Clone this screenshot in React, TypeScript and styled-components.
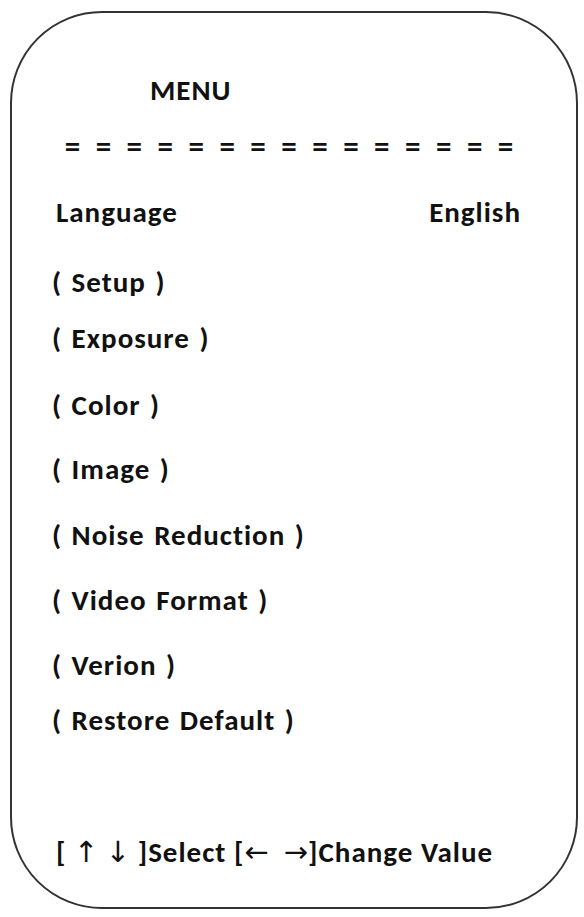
import React from "react";
import styled, { createGlobalStyle } from "styled-components";

const GlobalStyle = createGlobalStyle`
  html, body {
    margin: 0;
    padding: 0;
    background: #ffffff;
  }
  body {
    font-family: Carlito, Calibri, Lato, sans-serif;
    color: #111111;
  }
`;

const Page = styled.div`
  width: 584px;
  height: 917px;
  box-sizing: border-box;
  padding: 11px 6px 8px 10px;
  background: #ffffff;
`;

const Frame = styled.div`
  box-sizing: border-box;
  height: 100%;
  border: 2px solid #333333;
  border-radius: 92px;
  padding: 61px 55px 0 40px;
  display: flex;
  flex-direction: column;
  font-weight: 700;
  font-size: 29px;
  line-height: 32px;
  letter-spacing: 1px;
  word-spacing: 2px;
`;

const Title = styled.div`
  padding-left: 98px;
`;

const Divider = styled.div`
  display: flex;
  margin-top: 24px;
  padding-left: 5px;
  font-size: 31px;
  letter-spacing: 0;
`;

const Bar = styled.span`
  width: 31px;
  text-align: center;
`;

const SettingRow = styled.div`
  display: flex;
  justify-content: space-between;
  margin-top: 34px;
  padding-left: 4px;
`;

const Item = styled.div<{ $gap: number }>`
  margin-top: ${(p) => p.$gap}px;
`;

const Hint = styled.div`
  margin-top: 100px;
  padding-left: 4px;
  white-space: pre;
  word-spacing: 0;
`;

const Arrow = styled.span`
  font-family: "DejaVu Sans", sans-serif;
  font-weight: 400;
  letter-spacing: 0;
`;

const items: { label: string; gap: number }[] = [
  { label: "Setup", gap: 38 },
  { label: "Exposure", gap: 24 },
  { label: "Color", gap: 35 },
  { label: "Image", gap: 32 },
  { label: "Noise Reduction", gap: 34 },
  { label: "Video Format", gap: 33 },
  { label: "Verion", gap: 33 },
  { label: "Restore Default", gap: 23 },
];

export default function App() {
  return (
    <>
      <GlobalStyle />
      <Page>
        <Frame>
          <Title>MENU</Title>
          <Divider>
            {Array.from({ length: 15 }, (_, i) => (
              <Bar key={i}>=</Bar>
            ))}
          </Divider>
          <SettingRow>
            <span>Language</span>
            <span>English</span>
          </SettingRow>
          {items.map((it) => (
            <Item key={it.label} $gap={it.gap}>
              ( {it.label} )
            </Item>
          ))}
          <Hint>
            [ <Arrow>↑</Arrow> <Arrow>↓</Arrow> ]Select [<Arrow>←</Arrow>{"  "}
            <Arrow>→</Arrow>]Change Value
          </Hint>
        </Frame>
      </Page>
    </>
  );
}
